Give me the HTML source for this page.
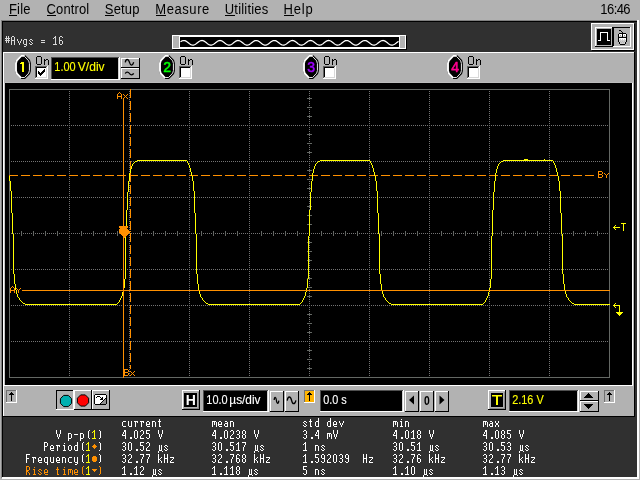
<!DOCTYPE html>
<html><head><meta charset="utf-8"><title>Infiniium</title>
<style>
html,body{margin:0;padding:0;background:#b2b2b2;overflow:hidden}
svg{display:block;will-change:transform}
text{white-space:pre}
</style></head>
<body>
<svg width="640" height="480" viewBox="0 0 640 480" shape-rendering="crispEdges">
<defs><path id="g0" d="M1 0h1v1h-1zM3 0h1v1h-1zM1 1h1v1h-1zM3 1h1v1h-1zM0 2h5v1h-5zM1 3h1v1h-1zM3 3h1v1h-1zM0 4h5v1h-5zM1 5h1v1h-1zM3 5h1v1h-1zM1 6h1v1h-1zM3 6h1v1h-1z"/><path id="g1" d="M1 0h2v1h-2zM0 1h1v1h-1zM3 1h1v1h-1zM0 2h1v1h-1zM3 2h1v1h-1zM0 3h1v1h-1zM3 3h1v1h-1zM0 4h4v1h-4zM0 5h1v1h-1zM3 5h1v1h-1zM0 6h1v1h-1zM3 6h1v1h-1zM0 7h1v1h-1zM3 7h1v1h-1zM0 8h1v1h-1zM3 8h1v1h-1z"/><path id="g2" d="M0 3h1v1h-1zM4 3h1v1h-1zM0 4h1v1h-1zM4 4h1v1h-1zM1 5h1v1h-1zM3 5h1v1h-1zM1 6h1v1h-1zM3 6h1v1h-1zM2 7h1v1h-1zM2 8h1v1h-1z"/><path id="g3" d="M1 3h3v1h-3zM0 4h1v1h-1zM3 4h1v1h-1zM0 5h1v1h-1zM3 5h1v1h-1zM0 6h1v1h-1zM3 6h1v1h-1zM0 7h1v1h-1zM3 7h1v1h-1zM1 8h3v1h-3zM3 9h1v1h-1zM1 10h2v1h-2z"/><path id="g4" d="M1 3h2v1h-2zM0 4h1v1h-1zM3 4h1v1h-1zM1 5h1v1h-1zM2 6h1v1h-1zM0 7h1v1h-1zM3 7h1v1h-1zM1 8h2v1h-2z"/><path id="g5" d="M0 4h4v1h-4zM0 6h4v1h-4z"/><path id="g6" d="M2 0h1v1h-1zM1 1h2v1h-2zM0 2h1v1h-1zM2 2h1v1h-1zM2 3h1v1h-1zM2 4h1v1h-1zM2 5h1v1h-1zM2 6h1v1h-1zM2 7h1v1h-1zM0 8h4v1h-4z"/><path id="g7" d="M1 0h2v1h-2zM0 1h1v1h-1zM3 1h1v1h-1zM0 2h1v1h-1zM0 3h1v1h-1zM0 4h3v1h-3zM0 5h1v1h-1zM3 5h1v1h-1zM0 6h1v1h-1zM3 6h1v1h-1zM0 7h1v1h-1zM3 7h1v1h-1zM1 8h2v1h-2z"/><path id="g8" d="M1 0h4v1h-4zM0 1h1v1h-1zM5 1h1v1h-1zM0 2h1v1h-1zM5 2h1v1h-1zM0 3h1v1h-1zM5 3h1v1h-1zM0 4h1v1h-1zM5 4h1v1h-1zM0 5h1v1h-1zM5 5h1v1h-1zM0 6h1v1h-1zM5 6h1v1h-1zM0 7h1v1h-1zM5 7h1v1h-1zM1 8h4v1h-4z"/><path id="g9" d="M0 3h1v1h-1zM2 3h2v1h-2zM0 4h2v1h-2zM4 4h1v1h-1zM0 5h1v1h-1zM4 5h1v1h-1zM0 6h1v1h-1zM4 6h1v1h-1zM0 7h1v1h-1zM4 7h1v1h-1zM0 8h1v1h-1zM4 8h1v1h-1z"/><path id="g10" d="M1 3h3v1h-3zM0 4h1v1h-1zM0 5h1v1h-1zM0 6h1v1h-1zM0 7h1v1h-1zM1 8h3v1h-3z"/><path id="g11" d="M0 3h1v1h-1zM3 3h1v1h-1zM0 4h1v1h-1zM3 4h1v1h-1zM0 5h1v1h-1zM3 5h1v1h-1zM0 6h1v1h-1zM3 6h1v1h-1zM0 7h1v1h-1zM3 7h1v1h-1zM1 8h3v1h-3z"/><path id="g12" d="M0 3h4v1h-4zM1 4h1v1h-1zM3 4h1v1h-1zM1 5h1v1h-1zM1 6h1v1h-1zM1 7h1v1h-1zM1 8h1v1h-1z"/><path id="g13" d="M1 3h2v1h-2zM0 4h1v1h-1zM3 4h1v1h-1zM0 5h1v1h-1zM3 5h1v1h-1zM0 6h4v1h-4zM0 7h1v1h-1zM1 8h3v1h-3z"/><path id="g14" d="M0 3h3v1h-3zM0 4h1v1h-1zM3 4h1v1h-1zM0 5h1v1h-1zM3 5h1v1h-1zM0 6h1v1h-1zM3 6h1v1h-1zM0 7h1v1h-1zM3 7h1v1h-1zM0 8h1v1h-1zM3 8h1v1h-1z"/><path id="g15" d="M1 1h1v1h-1zM1 2h1v1h-1zM0 3h3v1h-3zM1 4h1v1h-1zM1 5h1v1h-1zM1 6h1v1h-1zM1 7h1v1h-1zM1 8h2v1h-2z"/><path id="g16" d="M0 3h4v1h-4zM0 4h1v1h-1zM2 4h1v1h-1zM4 4h1v1h-1zM0 5h1v1h-1zM2 5h1v1h-1zM4 5h1v1h-1zM0 6h1v1h-1zM2 6h1v1h-1zM4 6h1v1h-1zM0 7h1v1h-1zM4 7h1v1h-1zM0 8h1v1h-1zM4 8h1v1h-1z"/><path id="g17" d="M1 3h2v1h-2zM3 4h1v1h-1zM1 5h3v1h-3zM0 6h1v1h-1zM3 6h1v1h-1zM0 7h1v1h-1zM3 7h1v1h-1zM1 8h3v1h-3z"/><path id="g18" d="M3 0h1v1h-1zM3 1h1v1h-1zM3 2h1v1h-1zM1 3h3v1h-3zM0 4h1v1h-1zM3 4h1v1h-1zM0 5h1v1h-1zM3 5h1v1h-1zM0 6h1v1h-1zM3 6h1v1h-1zM0 7h1v1h-1zM3 7h1v1h-1zM1 8h3v1h-3z"/><path id="g19" d="M2 1h1v1h-1zM1 3h2v1h-2zM2 4h1v1h-1zM2 5h1v1h-1zM2 6h1v1h-1zM2 7h1v1h-1zM1 8h3v1h-3z"/><path id="g20" d="M0 3h1v1h-1zM3 3h1v1h-1zM0 4h1v1h-1zM3 4h1v1h-1zM1 5h2v1h-2zM1 6h2v1h-2zM0 7h1v1h-1zM3 7h1v1h-1zM0 8h1v1h-1zM3 8h1v1h-1z"/><path id="g21" d="M0 0h1v1h-1zM4 0h1v1h-1zM0 1h1v1h-1zM4 1h1v1h-1zM0 2h1v1h-1zM4 2h1v1h-1zM0 3h1v1h-1zM4 3h1v1h-1zM1 4h1v1h-1zM3 4h1v1h-1zM1 5h1v1h-1zM3 5h1v1h-1zM1 6h1v1h-1zM3 6h1v1h-1zM2 7h1v1h-1zM2 8h1v1h-1z"/><path id="g22" d="M0 3h3v1h-3zM0 4h1v1h-1zM3 4h1v1h-1zM0 5h1v1h-1zM3 5h1v1h-1zM0 6h1v1h-1zM3 6h1v1h-1zM0 7h1v1h-1zM3 7h1v1h-1zM0 8h3v1h-3zM0 9h1v1h-1zM0 10h1v1h-1z"/><path id="g23" d="M0 4h4v1h-4z"/><path id="g24" d="M3 0h1v1h-1zM2 1h1v1h-1zM2 2h1v1h-1zM2 3h1v1h-1zM2 4h1v1h-1zM2 5h1v1h-1zM2 6h1v1h-1zM2 7h1v1h-1zM3 8h1v1h-1z"/><path id="g25" d="M1 0h1v1h-1zM2 1h1v1h-1zM2 2h1v1h-1zM2 3h1v1h-1zM2 4h1v1h-1zM2 5h1v1h-1zM2 6h1v1h-1zM2 7h1v1h-1zM1 8h1v1h-1z"/><path id="g26" d="M2 0h2v1h-2zM2 1h2v1h-2zM1 2h1v1h-1zM3 2h1v1h-1zM1 3h1v1h-1zM3 3h1v1h-1zM0 4h1v1h-1zM3 4h1v1h-1zM0 5h4v1h-4zM3 6h1v1h-1zM3 7h1v1h-1zM3 8h1v1h-1z"/><path id="g27" d="M2 7h2v1h-2zM2 8h2v1h-2z"/><path id="g28" d="M1 0h2v1h-2zM0 1h1v1h-1zM3 1h1v1h-1zM0 2h1v1h-1zM3 2h1v1h-1zM0 3h1v1h-1zM3 3h1v1h-1zM0 4h1v1h-1zM3 4h1v1h-1zM0 5h1v1h-1zM3 5h1v1h-1zM0 6h1v1h-1zM3 6h1v1h-1zM0 7h1v1h-1zM3 7h1v1h-1zM1 8h2v1h-2z"/><path id="g29" d="M1 0h2v1h-2zM0 1h1v1h-1zM3 1h1v1h-1zM3 2h1v1h-1zM3 3h1v1h-1zM2 4h1v1h-1zM1 5h1v1h-1zM0 6h1v1h-1zM0 7h1v1h-1zM0 8h4v1h-4z"/><path id="g30" d="M0 0h4v1h-4zM0 1h1v1h-1zM0 2h1v1h-1zM0 3h3v1h-3zM3 4h1v1h-1zM3 5h1v1h-1zM3 6h1v1h-1zM0 7h1v1h-1zM3 7h1v1h-1zM1 8h2v1h-2z"/><path id="g31" d="M1 0h2v1h-2zM0 1h1v1h-1zM3 1h1v1h-1zM3 2h1v1h-1zM3 3h1v1h-1zM1 4h2v1h-2zM3 5h1v1h-1zM3 6h1v1h-1zM0 7h1v1h-1zM3 7h1v1h-1zM1 8h2v1h-2z"/><path id="g32" d="M1 0h2v1h-2zM0 1h1v1h-1zM3 1h1v1h-1zM0 2h1v1h-1zM3 2h1v1h-1zM0 3h1v1h-1zM3 3h1v1h-1zM1 4h2v1h-2zM0 5h1v1h-1zM3 5h1v1h-1zM0 6h1v1h-1zM3 6h1v1h-1zM0 7h1v1h-1zM3 7h1v1h-1zM1 8h2v1h-2z"/><path id="g33" d="M0 0h3v1h-3zM0 1h1v1h-1zM3 1h1v1h-1zM0 2h1v1h-1zM3 2h1v1h-1zM0 3h1v1h-1zM3 3h1v1h-1zM0 4h3v1h-3zM0 5h1v1h-1zM0 6h1v1h-1zM0 7h1v1h-1zM0 8h1v1h-1z"/><path id="g34" d="M1 3h2v1h-2zM0 4h1v1h-1zM3 4h1v1h-1zM0 5h1v1h-1zM3 5h1v1h-1zM0 6h1v1h-1zM3 6h1v1h-1zM0 7h1v1h-1zM3 7h1v1h-1zM1 8h2v1h-2z"/><path id="g35" d="M1 3h1v1h-1zM3 3h1v1h-1zM1 4h1v1h-1zM3 4h1v1h-1zM1 5h1v1h-1zM3 5h1v1h-1zM1 6h1v1h-1zM3 6h1v1h-1zM1 7h1v1h-1zM3 7h1v1h-1zM1 8h3v1h-3zM0 9h1v1h-1zM4 9h1v1h-1zM0 10h1v1h-1z"/><path id="g36" d="M0 0h4v1h-4zM3 1h1v1h-1zM3 2h1v1h-1zM2 3h1v1h-1zM2 4h1v1h-1zM1 5h1v1h-1zM1 6h1v1h-1zM1 7h1v1h-1zM1 8h1v1h-1z"/><path id="g37" d="M0 0h4v1h-4zM0 1h1v1h-1zM0 2h1v1h-1zM0 3h1v1h-1zM0 4h3v1h-3zM0 5h1v1h-1zM0 6h1v1h-1zM0 7h1v1h-1zM0 8h1v1h-1z"/><path id="g38" d="M1 3h3v1h-3zM0 4h1v1h-1zM3 4h1v1h-1zM0 5h1v1h-1zM3 5h1v1h-1zM0 6h1v1h-1zM3 6h1v1h-1zM0 7h1v1h-1zM3 7h1v1h-1zM1 8h3v1h-3zM3 9h1v1h-1zM3 10h1v1h-1z"/><path id="g39" d="M0 3h1v1h-1zM3 3h1v1h-1zM0 4h1v1h-1zM3 4h1v1h-1zM0 5h1v1h-1zM3 5h1v1h-1zM0 6h1v1h-1zM3 6h1v1h-1zM0 7h1v1h-1zM3 7h1v1h-1zM1 8h3v1h-3zM3 9h1v1h-1zM1 10h2v1h-2z"/><path id="g40" d="M0 0h1v1h-1zM0 1h1v1h-1zM0 2h1v1h-1zM0 3h1v1h-1zM3 3h1v1h-1zM0 4h1v1h-1zM2 4h1v1h-1zM0 5h2v1h-2zM0 6h1v1h-1zM2 6h1v1h-1zM0 7h1v1h-1zM3 7h1v1h-1zM0 8h1v1h-1zM3 8h1v1h-1z"/><path id="g41" d="M0 0h1v1h-1zM3 0h1v1h-1zM0 1h1v1h-1zM3 1h1v1h-1zM0 2h1v1h-1zM3 2h1v1h-1zM0 3h1v1h-1zM3 3h1v1h-1zM0 4h4v1h-4zM0 5h1v1h-1zM3 5h1v1h-1zM0 6h1v1h-1zM3 6h1v1h-1zM0 7h1v1h-1zM3 7h1v1h-1zM0 8h1v1h-1zM3 8h1v1h-1z"/><path id="g42" d="M0 3h4v1h-4zM3 4h1v1h-1zM2 5h1v1h-1zM1 6h1v1h-1zM0 7h1v1h-1zM0 8h4v1h-4z"/><path id="g43" d="M1 0h2v1h-2zM0 1h1v1h-1zM3 1h1v1h-1zM0 2h1v1h-1zM3 2h1v1h-1zM0 3h1v1h-1zM3 3h1v1h-1zM1 4h3v1h-3zM3 5h1v1h-1zM3 6h1v1h-1zM0 7h1v1h-1zM3 7h1v1h-1zM1 8h2v1h-2z"/><path id="g44" d="M0 0h3v1h-3zM0 1h1v1h-1zM3 1h1v1h-1zM0 2h1v1h-1zM3 2h1v1h-1zM0 3h1v1h-1zM3 3h1v1h-1zM0 4h3v1h-3zM0 5h2v1h-2zM0 6h1v1h-1zM2 6h1v1h-1zM0 7h1v1h-1zM3 7h1v1h-1zM0 8h1v1h-1zM3 8h1v1h-1z"/></defs>
<rect x="0" y="0" width="640" height="480" fill="#b2b2b2"/>
<rect x="1" y="20" width="637" height="1" fill="#808080"/>
<rect x="1" y="20" width="1" height="458" fill="#808080"/>
<rect x="2" y="21" width="635" height="1" fill="#000"/>
<rect x="2" y="21" width="1" height="456" fill="#000"/>
<rect x="637" y="20" width="2" height="459" fill="#fff"/>
<rect x="2" y="477" width="637" height="2" fill="#fff"/>
<rect x="3" y="22" width="634" height="455" fill="#303030"/>
<text transform="translate(9 14) scale(1 1.07)" font-family="'Liberation Sans', sans-serif" font-size="13" fill="#000" textLength="21.50" lengthAdjust="spacing">File</text>
<rect x="9" y="15" width="8" height="1" fill="#000"/>
<text transform="translate(46.6 14) scale(1 1.07)" font-family="'Liberation Sans', sans-serif" font-size="13" fill="#000" textLength="42.60" lengthAdjust="spacing">Control</text>
<rect x="47" y="15" width="9" height="1" fill="#000"/>
<text transform="translate(104.8 14) scale(1 1.07)" font-family="'Liberation Sans', sans-serif" font-size="13" fill="#000" textLength="34.60" lengthAdjust="spacing">Setup</text>
<rect x="105" y="15" width="9" height="1" fill="#000"/>
<text transform="translate(155.3 14) scale(1 1.07)" font-family="'Liberation Sans', sans-serif" font-size="13" fill="#000" textLength="54.00" lengthAdjust="spacing">Measure</text>
<rect x="156" y="15" width="10" height="1" fill="#000"/>
<text transform="translate(224.8 14) scale(1 1.07)" font-family="'Liberation Sans', sans-serif" font-size="13" fill="#000" textLength="43.40" lengthAdjust="spacing">Utilities</text>
<rect x="225" y="15" width="10" height="1" fill="#000"/>
<text transform="translate(283.5 14) scale(1 1.07)" font-family="'Liberation Sans', sans-serif" font-size="13" fill="#000" textLength="29.20" lengthAdjust="spacing">Help</text>
<rect x="284" y="15" width="10" height="1" fill="#000"/>
<text transform="translate(600.3 14) scale(1 1.07)" font-family="'Liberation Sans', sans-serif" font-size="13" fill="#000" textLength="30.30" lengthAdjust="spacing">16:46</text>
<g fill="#d8d8d8"><use href="#g0" x="5" y="36"/><use href="#g1" x="11" y="36"/><use href="#g2" x="17" y="36"/><use href="#g3" x="23" y="36"/><use href="#g4" x="29" y="36"/><use href="#g5" x="41" y="36"/><use href="#g6" x="53" y="36"/><use href="#g7" x="59" y="36"/></g>
<rect x="173" y="36" width="234" height="14" fill="#000"/>
<rect x="172" y="35" width="234" height="14" fill="#fff"/>
<rect x="173" y="36" width="232" height="12" fill="#b2b2b2"/>
<rect x="179" y="36" width="221" height="12" fill="#fff"/>
<rect x="180" y="37" width="219" height="10" fill="#000"/>
<polyline points="180.5,41.85 181.0,41.50 181.5,41.19 182.0,40.93 182.5,40.73 183.0,40.59 183.5,40.51 184.0,40.51 184.5,40.57 185.0,40.70 185.5,40.89 186.0,41.14 186.5,41.44 187.0,41.78 187.5,42.15 188.0,42.54 188.5,42.94 189.0,43.33 189.5,43.71 190.0,44.06 190.5,44.38 191.0,44.64 191.5,44.85 192.0,45.00 192.5,45.08 193.0,45.10 193.5,45.04 194.0,44.92 194.5,44.73 195.0,44.49 195.5,44.19 196.0,43.86 196.5,43.49 197.0,43.10 197.5,42.70 198.0,42.30 198.5,41.92 199.0,41.57 199.5,41.25 200.0,40.98 200.5,40.77 201.0,40.61 201.5,40.52 202.0,40.50 202.5,40.55 203.0,40.67 203.5,40.85 204.0,41.08 204.5,41.37 205.0,41.71 205.5,42.07 206.0,42.46 206.5,42.86 207.0,43.26 207.5,43.64 208.0,44.00 208.5,44.32 209.0,44.59 209.5,44.81 210.0,44.98 210.5,45.07 211.0,45.10 211.5,45.06 212.0,44.95 212.5,44.78 213.0,44.54 213.5,44.26 214.0,43.93 214.5,43.56 215.0,43.18 215.5,42.78 216.0,42.38 216.5,42.00 217.0,41.64 217.5,41.31 218.0,41.03 218.5,40.80 219.0,40.64 219.5,40.53 220.0,40.50 220.5,40.53 221.0,40.64 221.5,40.80 222.0,41.03 222.5,41.31 223.0,41.64 223.5,42.00 224.0,42.38 224.5,42.78 225.0,43.18 225.5,43.56 226.0,43.93 226.5,44.26 227.0,44.54 227.5,44.78 228.0,44.95 228.5,45.06 229.0,45.10 229.5,45.07 230.0,44.98 230.5,44.81 231.0,44.59 231.5,44.32 232.0,44.00 232.5,43.64 233.0,43.26 233.5,42.86 234.0,42.46 234.5,42.07 235.0,41.71 235.5,41.37 236.0,41.08 236.5,40.85 237.0,40.67 237.5,40.55 238.0,40.50 238.5,40.52 239.0,40.61 239.5,40.77 240.0,40.98 240.5,41.25 241.0,41.57 241.5,41.92 242.0,42.30 242.5,42.70 243.0,43.10 243.5,43.49 244.0,43.86 244.5,44.19 245.0,44.49 245.5,44.73 246.0,44.92 246.5,45.04 247.0,45.10 247.5,45.08 248.0,45.00 248.5,44.85 249.0,44.64 249.5,44.38 250.0,44.06 250.5,43.71 251.0,43.33 251.5,42.94 252.0,42.54 252.5,42.15 253.0,41.78 253.5,41.44 254.0,41.14 254.5,40.89 255.0,40.70 255.5,40.57 256.0,40.51 256.5,40.51 257.0,40.59 257.5,40.73 258.0,40.93 258.5,41.19 259.0,41.50 259.5,41.85 260.0,42.23 260.5,42.62 261.0,43.02 261.5,43.41 262.0,43.79 262.5,44.13 263.0,44.43 263.5,44.69 264.0,44.89 264.5,45.02 265.0,45.09 265.5,45.09 266.0,45.02 266.5,44.89 267.0,44.69 267.5,44.43 268.0,44.13 268.5,43.79 269.0,43.41 269.5,43.02 270.0,42.62 270.5,42.23 271.0,41.85 271.5,41.50 272.0,41.19 272.5,40.93 273.0,40.73 273.5,40.59 274.0,40.51 274.5,40.51 275.0,40.57 275.5,40.70 276.0,40.89 276.5,41.14 277.0,41.44 277.5,41.78 278.0,42.15 278.5,42.54 279.0,42.94 279.5,43.33 280.0,43.71 280.5,44.06 281.0,44.38 281.5,44.64 282.0,44.85 282.5,45.00 283.0,45.08 283.5,45.10 284.0,45.04 284.5,44.92 285.0,44.73 285.5,44.49 286.0,44.19 286.5,43.86 287.0,43.49 287.5,43.10 288.0,42.70 288.5,42.30 289.0,41.92 289.5,41.57 290.0,41.25 290.5,40.98 291.0,40.77 291.5,40.61 292.0,40.52 292.5,40.50 293.0,40.55 293.5,40.67 294.0,40.85 294.5,41.08 295.0,41.37 295.5,41.71 296.0,42.07 296.5,42.46 297.0,42.86 297.5,43.26 298.0,43.64 298.5,44.00 299.0,44.32 299.5,44.59 300.0,44.81 300.5,44.98 301.0,45.07 301.5,45.10 302.0,45.06 302.5,44.95 303.0,44.78 303.5,44.54 304.0,44.26 304.5,43.93 305.0,43.56 305.5,43.18 306.0,42.78 306.5,42.38 307.0,42.00 307.5,41.64 308.0,41.31 308.5,41.03 309.0,40.80 309.5,40.64 310.0,40.53 310.5,40.50 311.0,40.53 311.5,40.64 312.0,40.80 312.5,41.03 313.0,41.31 313.5,41.64 314.0,42.00 314.5,42.38 315.0,42.78 315.5,43.18 316.0,43.56 316.5,43.93 317.0,44.26 317.5,44.54 318.0,44.78 318.5,44.95 319.0,45.06 319.5,45.10 320.0,45.07 320.5,44.98 321.0,44.81 321.5,44.59 322.0,44.32 322.5,44.00 323.0,43.64 323.5,43.26 324.0,42.86 324.5,42.46 325.0,42.07 325.5,41.71 326.0,41.37 326.5,41.08 327.0,40.85 327.5,40.67 328.0,40.55 328.5,40.50 329.0,40.52 329.5,40.61 330.0,40.77 330.5,40.98 331.0,41.25 331.5,41.57 332.0,41.92 332.5,42.30 333.0,42.70 333.5,43.10 334.0,43.49 334.5,43.86 335.0,44.19 335.5,44.49 336.0,44.73 336.5,44.92 337.0,45.04 337.5,45.10 338.0,45.08 338.5,45.00 339.0,44.85 339.5,44.64 340.0,44.38 340.5,44.06 341.0,43.71 341.5,43.33 342.0,42.94 342.5,42.54 343.0,42.15 343.5,41.78 344.0,41.44 344.5,41.14 345.0,40.89 345.5,40.70 346.0,40.57 346.5,40.51 347.0,40.51 347.5,40.59 348.0,40.73 348.5,40.93 349.0,41.19 349.5,41.50 350.0,41.85 350.5,42.23 351.0,42.62 351.5,43.02 352.0,43.41 352.5,43.79 353.0,44.13 353.5,44.43 354.0,44.69 354.5,44.89 355.0,45.02 355.5,45.09 356.0,45.09 356.5,45.02 357.0,44.89 357.5,44.69 358.0,44.43 358.5,44.13 359.0,43.79 359.5,43.41 360.0,43.02 360.5,42.62 361.0,42.23 361.5,41.85 362.0,41.50 362.5,41.19 363.0,40.93 363.5,40.73 364.0,40.59 364.5,40.51 365.0,40.51 365.5,40.57 366.0,40.70 366.5,40.89 367.0,41.14 367.5,41.44 368.0,41.78 368.5,42.15 369.0,42.54 369.5,42.94 370.0,43.33 370.5,43.71 371.0,44.06 371.5,44.38 372.0,44.64 372.5,44.85 373.0,45.00 373.5,45.08 374.0,45.10 374.5,45.04 375.0,44.92 375.5,44.73 376.0,44.49 376.5,44.19 377.0,43.86 377.5,43.49 378.0,43.10 378.5,42.70 379.0,42.30 379.5,41.92 380.0,41.57 380.5,41.25 381.0,40.98 381.5,40.77 382.0,40.61 382.5,40.52 383.0,40.50 383.5,40.55 384.0,40.67 384.5,40.85 385.0,41.08 385.5,41.37 386.0,41.71 386.5,42.07 387.0,42.46 387.5,42.86 388.0,43.26 388.5,43.64 389.0,44.00 389.5,44.32 390.0,44.59 390.5,44.81 391.0,44.98 391.5,45.07 392.0,45.10 392.5,45.06 393.0,44.95 393.5,44.78 394.0,44.54 394.5,44.26 395.0,43.93 395.5,43.56 396.0,43.18 396.5,42.78 397.0,42.38 397.5,42.00 398.0,41.64 398.5,41.31" fill="none" stroke="#fff" stroke-width="1.25" shape-rendering="auto"/>
<rect x="592" y="24" width="43" height="27" fill="#000"/>
<rect x="591" y="23" width="43" height="27" fill="#fff"/>
<rect x="592" y="24" width="41" height="25" fill="#b2b2b2"/>
<rect x="595" y="27" width="18" height="20" fill="#000"/>
<rect x="595" y="27" width="17" height="19" fill="#fff"/>
<rect x="596" y="28" width="16" height="18" fill="#b2b2b2"/>
<rect x="597" y="29" width="14" height="16" fill="#000"/>
<path d="M598 40.5H600.5V32.5H607.5V40.5H610" fill="none" stroke="#fff" stroke-width="1" />
<rect x="613" y="27" width="18" height="20" fill="#fff"/>
<rect x="613" y="27" width="17" height="19" fill="#000"/>
<rect x="614" y="28" width="16" height="18" fill="#b2b2b2"/>
<rect x="619" y="30" width="2" height="1" fill="#000"/>
<rect x="621" y="31" width="1" height="1" fill="#000"/>
<rect x="622" y="32" width="1" height="1" fill="#000"/>
<rect x="619" y="33" width="7" height="1" fill="#000"/>
<rect x="618" y="34" width="1" height="1" fill="#000"/>
<rect x="619" y="34" width="3" height="1" fill="#fff"/>
<rect x="622" y="34" width="1" height="1" fill="#000"/>
<rect x="623" y="34" width="3" height="1" fill="#fff"/>
<rect x="626" y="34" width="1" height="1" fill="#000"/>
<rect x="618" y="35" width="1" height="1" fill="#000"/>
<rect x="619" y="35" width="1" height="1" fill="#fff"/>
<rect x="620" y="35" width="1" height="1" fill="#909090"/>
<rect x="621" y="35" width="1" height="1" fill="#fff"/>
<rect x="622" y="35" width="1" height="1" fill="#000"/>
<rect x="623" y="35" width="1" height="1" fill="#fff"/>
<rect x="624" y="35" width="1" height="1" fill="#909090"/>
<rect x="625" y="35" width="1" height="1" fill="#fff"/>
<rect x="626" y="35" width="1" height="1" fill="#000"/>
<rect x="618" y="36" width="1" height="1" fill="#000"/>
<rect x="619" y="36" width="3" height="1" fill="#d0d0d0"/>
<rect x="622" y="36" width="1" height="1" fill="#000"/>
<rect x="623" y="36" width="3" height="1" fill="#d0d0d0"/>
<rect x="626" y="36" width="1" height="1" fill="#000"/>
<rect x="618" y="37" width="9" height="1" fill="#000"/>
<rect x="618" y="38" width="1" height="1" fill="#000"/>
<rect x="619" y="38" width="7" height="1" fill="#fff"/>
<rect x="626" y="38" width="1" height="1" fill="#000"/>
<rect x="618" y="39" width="1" height="1" fill="#000"/>
<rect x="619" y="39" width="1" height="1" fill="#fff"/>
<rect x="620" y="39" width="1" height="1" fill="#d0d0d0"/>
<rect x="621" y="39" width="1" height="1" fill="#fff"/>
<rect x="622" y="39" width="1" height="1" fill="#d0d0d0"/>
<rect x="623" y="39" width="1" height="1" fill="#fff"/>
<rect x="624" y="39" width="1" height="1" fill="#d0d0d0"/>
<rect x="625" y="39" width="1" height="1" fill="#fff"/>
<rect x="626" y="39" width="1" height="1" fill="#000"/>
<rect x="618" y="40" width="1" height="1" fill="#000"/>
<rect x="619" y="40" width="7" height="1" fill="#d0d0d0"/>
<rect x="626" y="40" width="1" height="1" fill="#000"/>
<rect x="618" y="41" width="1" height="1" fill="#000"/>
<rect x="619" y="41" width="1" height="1" fill="#d0d0d0"/>
<rect x="620" y="41" width="1" height="1" fill="#b8b8b8"/>
<rect x="621" y="41" width="1" height="1" fill="#d0d0d0"/>
<rect x="622" y="41" width="1" height="1" fill="#b8b8b8"/>
<rect x="623" y="41" width="1" height="1" fill="#d0d0d0"/>
<rect x="624" y="41" width="1" height="1" fill="#b8b8b8"/>
<rect x="625" y="41" width="1" height="1" fill="#d0d0d0"/>
<rect x="626" y="41" width="1" height="1" fill="#000"/>
<rect x="619" y="42" width="1" height="1" fill="#000"/>
<rect x="620" y="42" width="1" height="1" fill="#d0d0d0"/>
<rect x="621" y="42" width="1" height="1" fill="#b8b8b8"/>
<rect x="622" y="42" width="1" height="1" fill="#d0d0d0"/>
<rect x="623" y="42" width="1" height="1" fill="#b8b8b8"/>
<rect x="624" y="42" width="1" height="1" fill="#d0d0d0"/>
<rect x="625" y="42" width="1" height="1" fill="#000"/>
<rect x="619" y="43" width="1" height="1" fill="#000"/>
<rect x="620" y="43" width="5" height="1" fill="#d0d0d0"/>
<rect x="625" y="43" width="1" height="1" fill="#000"/>
<rect x="620" y="44" width="5" height="1" fill="#000"/>
<rect x="3" y="52" width="631" height="364" fill="#b2b2b2"/>
<rect x="3" y="52" width="631" height="1" fill="#fff"/>
<rect x="3" y="52" width="1" height="364" fill="#fff"/>
<rect x="634" y="52" width="1" height="365" fill="#000"/>
<rect x="3" y="416" width="632" height="1" fill="#000"/>
<path d="M21.00 55.00 L25.00 55.00 L30.00 60.00 L30.90 63.00 L30.90 71.00 L30.00 74.00 L25.00 79.00 L21.00 79.00 L16.00 74.00 L15.10 71.00 L15.10 63.00 L16.00 60.00 Z" fill="#000" shape-rendering="auto"/>
<path d="M24.62 56.50 L28.69 60.88 L29.42 63.50 L29.42 70.50 L28.69 73.12 L24.62 77.50 L21.38 77.50" fill="none" stroke="#e8e8e8" stroke-width="1" shape-rendering="auto"/>
<path d="M21.23 78.10 L16.79 73.47 L15.99 70.70 L15.99 63.30 L16.79 60.52 L21.23 55.90 L24.77 55.90" fill="none" stroke="#fff" stroke-width="1.9" shape-rendering="auto" stroke-linejoin="round"/>
<rect x="22" y="62" width="2" height="10" fill="#ffff00"/>
<rect x="20" y="63" width="2" height="1" fill="#ffff00"/>
<rect x="21" y="62" width="1" height="1" fill="#ffff00"/>
<g fill="#000"><use href="#g8" x="36" y="56"/><use href="#g9" x="44" y="56"/></g>
<rect x="35" y="66" width="13" height="13" fill="#fff"/>
<rect x="35" y="66" width="12" height="1" fill="#606060"/>
<rect x="35" y="66" width="1" height="12" fill="#606060"/>
<rect x="36" y="67" width="10" height="1" fill="#000"/>
<rect x="36" y="67" width="1" height="10" fill="#000"/>
<rect x="36" y="77" width="11" height="1" fill="#d8d8d8"/>
<rect x="46" y="67" width="1" height="11" fill="#d8d8d8"/>
<rect x="38" y="71" width="1" height="3" fill="#000"/>
<rect x="39" y="72" width="1" height="3" fill="#000"/>
<rect x="40" y="73" width="1" height="3" fill="#000"/>
<rect x="41" y="72" width="1" height="3" fill="#000"/>
<rect x="42" y="71" width="1" height="3" fill="#000"/>
<rect x="43" y="70" width="1" height="3" fill="#000"/>
<rect x="44" y="69" width="1" height="3" fill="#000"/>
<path d="M165.00 55.00 L169.00 55.00 L174.00 60.00 L174.90 63.00 L174.90 71.00 L174.00 74.00 L169.00 79.00 L165.00 79.00 L160.00 74.00 L159.10 71.00 L159.10 63.00 L160.00 60.00 Z" fill="#000" shape-rendering="auto"/>
<path d="M168.62 56.50 L172.69 60.88 L173.42 63.50 L173.42 70.50 L172.69 73.12 L168.62 77.50 L165.38 77.50" fill="none" stroke="#e8e8e8" stroke-width="1" shape-rendering="auto"/>
<path d="M165.22 78.10 L160.79 73.47 L159.99 70.70 L159.99 63.30 L160.79 60.52 L165.22 55.90 L168.78 55.90" fill="none" stroke="#fff" stroke-width="1.9" shape-rendering="auto" stroke-linejoin="round"/>
<text x="167.2" y="72" font-family="'Liberation Sans', sans-serif" font-size="14" fill="#00ff00" text-anchor="middle" stroke="#00ff00" stroke-width="0.55">2</text>
<g fill="#000"><use href="#g8" x="180" y="56"/><use href="#g9" x="188" y="56"/></g>
<rect x="179" y="66" width="13" height="13" fill="#fff"/>
<rect x="179" y="66" width="12" height="1" fill="#606060"/>
<rect x="179" y="66" width="1" height="12" fill="#606060"/>
<rect x="180" y="67" width="10" height="1" fill="#000"/>
<rect x="180" y="67" width="1" height="10" fill="#000"/>
<rect x="180" y="77" width="11" height="1" fill="#d8d8d8"/>
<rect x="190" y="67" width="1" height="11" fill="#d8d8d8"/>
<path d="M309.00 55.00 L313.00 55.00 L318.00 60.00 L318.90 63.00 L318.90 71.00 L318.00 74.00 L313.00 79.00 L309.00 79.00 L304.00 74.00 L303.10 71.00 L303.10 63.00 L304.00 60.00 Z" fill="#000" shape-rendering="auto"/>
<path d="M312.62 56.50 L316.69 60.88 L317.42 63.50 L317.42 70.50 L316.69 73.12 L312.62 77.50 L309.38 77.50" fill="none" stroke="#e8e8e8" stroke-width="1" shape-rendering="auto"/>
<path d="M309.23 78.10 L304.79 73.47 L303.99 70.70 L303.99 63.30 L304.79 60.52 L309.23 55.90 L312.77 55.90" fill="none" stroke="#fff" stroke-width="1.9" shape-rendering="auto" stroke-linejoin="round"/>
<text x="311.2" y="72" font-family="'Liberation Sans', sans-serif" font-size="14" fill="#a000ff" text-anchor="middle" stroke="#a000ff" stroke-width="0.55">3</text>
<g fill="#000"><use href="#g8" x="324" y="56"/><use href="#g9" x="332" y="56"/></g>
<rect x="323" y="66" width="13" height="13" fill="#fff"/>
<rect x="323" y="66" width="12" height="1" fill="#606060"/>
<rect x="323" y="66" width="1" height="12" fill="#606060"/>
<rect x="324" y="67" width="10" height="1" fill="#000"/>
<rect x="324" y="67" width="1" height="10" fill="#000"/>
<rect x="324" y="77" width="11" height="1" fill="#d8d8d8"/>
<rect x="334" y="67" width="1" height="11" fill="#d8d8d8"/>
<path d="M453.00 55.00 L457.00 55.00 L462.00 60.00 L462.90 63.00 L462.90 71.00 L462.00 74.00 L457.00 79.00 L453.00 79.00 L448.00 74.00 L447.10 71.00 L447.10 63.00 L448.00 60.00 Z" fill="#000" shape-rendering="auto"/>
<path d="M456.62 56.50 L460.69 60.88 L461.42 63.50 L461.42 70.50 L460.69 73.12 L456.62 77.50 L453.38 77.50" fill="none" stroke="#e8e8e8" stroke-width="1" shape-rendering="auto"/>
<path d="M453.23 78.10 L448.79 73.47 L447.99 70.70 L447.99 63.30 L448.79 60.52 L453.23 55.90 L456.77 55.90" fill="none" stroke="#fff" stroke-width="1.9" shape-rendering="auto" stroke-linejoin="round"/>
<text x="455.2" y="72" font-family="'Liberation Sans', sans-serif" font-size="14" fill="#ff0090" text-anchor="middle" stroke="#ff0090" stroke-width="0.55">4</text>
<g fill="#000"><use href="#g8" x="468" y="56"/><use href="#g9" x="476" y="56"/></g>
<rect x="467" y="66" width="13" height="13" fill="#fff"/>
<rect x="467" y="66" width="12" height="1" fill="#606060"/>
<rect x="467" y="66" width="1" height="12" fill="#606060"/>
<rect x="468" y="67" width="10" height="1" fill="#000"/>
<rect x="468" y="67" width="1" height="10" fill="#000"/>
<rect x="468" y="77" width="11" height="1" fill="#d8d8d8"/>
<rect x="478" y="67" width="1" height="11" fill="#d8d8d8"/>
<rect x="51" y="57" width="69" height="23" fill="#fff"/>
<rect x="51" y="57" width="68" height="22" fill="#505050"/>
<rect x="52" y="58" width="67" height="21" fill="#000"/>
<rect x="118" y="58" width="1" height="21" fill="#d0d0d0"/>
<text transform="translate(54.3 71) scale(1 1.04)" font-family="'Liberation Sans', sans-serif" font-size="12" fill="#ffff00" textLength="21.30" lengthAdjust="spacingAndGlyphs" stroke="#ffff00" stroke-width="0.12">1.00</text>
<text transform="translate(77.8 71) scale(1 1.04)" font-family="'Liberation Sans', sans-serif" font-size="12" fill="#ffff00" textLength="26.80" lengthAdjust="spacingAndGlyphs" stroke="#ffff00" stroke-width="0.12">V/div</text>
<rect x="121" y="58" width="19" height="10" fill="#b2b2b2"/>
<rect x="121" y="58" width="19" height="1" fill="#fff"/>
<rect x="121" y="58" width="1" height="10" fill="#fff"/>
<rect x="121" y="67" width="19" height="1" fill="#000"/>
<rect x="139" y="58" width="1" height="10" fill="#000"/>
<rect x="121" y="68" width="19" height="11" fill="#b2b2b2"/>
<rect x="121" y="68" width="19" height="1" fill="#fff"/>
<rect x="121" y="68" width="1" height="11" fill="#fff"/>
<rect x="121" y="78" width="19" height="1" fill="#000"/>
<rect x="139" y="68" width="1" height="11" fill="#000"/>
<path d="M125.3 62.3 C126 58.6 128.3 58.6 129.5 62.3 C130.5 66 132.6 66 133.7 62.3" fill="none" stroke="#000" stroke-width="1.3" shape-rendering="auto"/>
<path d="M125.3 73.6 C126 71.7 128.3 71.7 129.5 73.5 C130.5 75.3 132.6 75.3 133.7 73.4" fill="none" stroke="#000" stroke-width="1.3" shape-rendering="auto"/>
<rect x="5" y="83" width="627" height="302" fill="#000"/>
<rect x="4" y="83" width="1" height="303" fill="#c4c4c4"/>
<rect x="5" y="82" width="628" height="1" fill="#bcbcbc"/>
<rect x="632" y="83" width="1" height="303" fill="#fff"/>
<rect x="4" y="385" width="629" height="1" fill="#fff"/>
<rect x="9.5" y="89.5" width="600" height="288" fill="none" stroke="#646864" stroke-width="1"/>
<line x1="69.5" y1="91" x2="69.5" y2="377" stroke="#747474" stroke-dasharray="1 1"/>
<line x1="129.5" y1="91" x2="129.5" y2="377" stroke="#747474" stroke-dasharray="1 1"/>
<line x1="189.5" y1="91" x2="189.5" y2="377" stroke="#747474" stroke-dasharray="1 1"/>
<line x1="249.5" y1="91" x2="249.5" y2="377" stroke="#747474" stroke-dasharray="1 1"/>
<line x1="309.5" y1="91" x2="309.5" y2="377" stroke="#747474" stroke-dasharray="1 1"/>
<line x1="369.5" y1="91" x2="369.5" y2="377" stroke="#747474" stroke-dasharray="1 1"/>
<line x1="429.5" y1="91" x2="429.5" y2="377" stroke="#747474" stroke-dasharray="1 1"/>
<line x1="489.5" y1="91" x2="489.5" y2="377" stroke="#747474" stroke-dasharray="1 1"/>
<line x1="549.5" y1="91" x2="549.5" y2="377" stroke="#747474" stroke-dasharray="1 1"/>
<line x1="11" y1="125.5" x2="609" y2="125.5" stroke="#747474" stroke-dasharray="1 1"/>
<line x1="11" y1="161.5" x2="609" y2="161.5" stroke="#747474" stroke-dasharray="1 1"/>
<line x1="11" y1="197.5" x2="609" y2="197.5" stroke="#747474" stroke-dasharray="1 1"/>
<line x1="11" y1="233.5" x2="609" y2="233.5" stroke="#747474" stroke-dasharray="1 1"/>
<line x1="11" y1="269.5" x2="609" y2="269.5" stroke="#747474" stroke-dasharray="1 1"/>
<line x1="11" y1="305.5" x2="609" y2="305.5" stroke="#747474" stroke-dasharray="1 1"/>
<line x1="11" y1="341.5" x2="609" y2="341.5" stroke="#747474" stroke-dasharray="1 1"/>
<rect x="21" y="231" width="1" height="5" fill="#646864"/>
<rect x="33" y="231" width="1" height="5" fill="#646864"/>
<rect x="45" y="231" width="1" height="5" fill="#646864"/>
<rect x="57" y="231" width="1" height="5" fill="#646864"/>
<rect x="81" y="231" width="1" height="5" fill="#646864"/>
<rect x="93" y="231" width="1" height="5" fill="#646864"/>
<rect x="105" y="231" width="1" height="5" fill="#646864"/>
<rect x="117" y="231" width="1" height="5" fill="#646864"/>
<rect x="141" y="231" width="1" height="5" fill="#646864"/>
<rect x="153" y="231" width="1" height="5" fill="#646864"/>
<rect x="165" y="231" width="1" height="5" fill="#646864"/>
<rect x="177" y="231" width="1" height="5" fill="#646864"/>
<rect x="201" y="231" width="1" height="5" fill="#646864"/>
<rect x="213" y="231" width="1" height="5" fill="#646864"/>
<rect x="225" y="231" width="1" height="5" fill="#646864"/>
<rect x="237" y="231" width="1" height="5" fill="#646864"/>
<rect x="261" y="231" width="1" height="5" fill="#646864"/>
<rect x="273" y="231" width="1" height="5" fill="#646864"/>
<rect x="285" y="231" width="1" height="5" fill="#646864"/>
<rect x="297" y="231" width="1" height="5" fill="#646864"/>
<rect x="321" y="231" width="1" height="5" fill="#646864"/>
<rect x="333" y="231" width="1" height="5" fill="#646864"/>
<rect x="345" y="231" width="1" height="5" fill="#646864"/>
<rect x="357" y="231" width="1" height="5" fill="#646864"/>
<rect x="381" y="231" width="1" height="5" fill="#646864"/>
<rect x="393" y="231" width="1" height="5" fill="#646864"/>
<rect x="405" y="231" width="1" height="5" fill="#646864"/>
<rect x="417" y="231" width="1" height="5" fill="#646864"/>
<rect x="441" y="231" width="1" height="5" fill="#646864"/>
<rect x="453" y="231" width="1" height="5" fill="#646864"/>
<rect x="465" y="231" width="1" height="5" fill="#646864"/>
<rect x="477" y="231" width="1" height="5" fill="#646864"/>
<rect x="501" y="231" width="1" height="5" fill="#646864"/>
<rect x="513" y="231" width="1" height="5" fill="#646864"/>
<rect x="525" y="231" width="1" height="5" fill="#646864"/>
<rect x="537" y="231" width="1" height="5" fill="#646864"/>
<rect x="561" y="231" width="1" height="5" fill="#646864"/>
<rect x="573" y="231" width="1" height="5" fill="#646864"/>
<rect x="585" y="231" width="1" height="5" fill="#646864"/>
<rect x="597" y="231" width="1" height="5" fill="#646864"/>
<rect x="307" y="98" width="5" height="1" fill="#646864"/>
<rect x="307" y="107" width="5" height="1" fill="#646864"/>
<rect x="307" y="116" width="5" height="1" fill="#646864"/>
<rect x="307" y="134" width="5" height="1" fill="#646864"/>
<rect x="307" y="143" width="5" height="1" fill="#646864"/>
<rect x="307" y="152" width="5" height="1" fill="#646864"/>
<rect x="307" y="170" width="5" height="1" fill="#646864"/>
<rect x="307" y="179" width="5" height="1" fill="#646864"/>
<rect x="307" y="188" width="5" height="1" fill="#646864"/>
<rect x="307" y="206" width="5" height="1" fill="#646864"/>
<rect x="307" y="215" width="5" height="1" fill="#646864"/>
<rect x="307" y="224" width="5" height="1" fill="#646864"/>
<rect x="307" y="242" width="5" height="1" fill="#646864"/>
<rect x="307" y="251" width="5" height="1" fill="#646864"/>
<rect x="307" y="260" width="5" height="1" fill="#646864"/>
<rect x="307" y="278" width="5" height="1" fill="#646864"/>
<rect x="307" y="287" width="5" height="1" fill="#646864"/>
<rect x="307" y="296" width="5" height="1" fill="#646864"/>
<rect x="307" y="314" width="5" height="1" fill="#646864"/>
<rect x="307" y="323" width="5" height="1" fill="#646864"/>
<rect x="307" y="332" width="5" height="1" fill="#646864"/>
<rect x="307" y="350" width="5" height="1" fill="#646864"/>
<rect x="307" y="359" width="5" height="1" fill="#646864"/>
<rect x="307" y="368" width="5" height="1" fill="#646864"/>
<line x1="9" y1="175.5" x2="595" y2="175.5" stroke="#ff9000" stroke-dasharray="9 3"/>
<line x1="130.5" y1="89" x2="130.5" y2="368.5" stroke="#ff9000" stroke-dasharray="9 3"/>
<rect x="9" y="176" width="1" height="5" fill="#ffff00"/>
<rect x="10" y="181" width="1" height="10" fill="#ffff00"/>
<rect x="11" y="191" width="1" height="22" fill="#ffff00"/>
<rect x="12" y="213" width="1" height="21" fill="#ffff00"/>
<rect x="13" y="234" width="1" height="40" fill="#ffff00"/>
<rect x="14" y="274" width="1" height="10" fill="#ffff00"/>
<rect x="15" y="284" width="1" height="6" fill="#ffff00"/>
<rect x="16" y="290" width="1" height="4" fill="#ffff00"/>
<rect x="17" y="294" width="1" height="3" fill="#ffff00"/>
<rect x="18" y="297" width="1" height="1" fill="#ffff00"/>
<rect x="19" y="298" width="1" height="2" fill="#ffff00"/>
<rect x="20" y="300" width="1" height="1" fill="#ffff00"/>
<rect x="21" y="301" width="1" height="1" fill="#ffff00"/>
<rect x="22" y="302" width="1" height="1" fill="#ffff00"/>
<rect x="23" y="303" width="2" height="1" fill="#ffff00"/>
<rect x="25" y="304" width="92" height="1" fill="#ffff00"/>
<rect x="117" y="303" width="1" height="1" fill="#ffff00"/>
<rect x="118" y="302" width="1" height="1" fill="#ffff00"/>
<rect x="119" y="300" width="1" height="2" fill="#ffff00"/>
<rect x="120" y="298" width="1" height="2" fill="#ffff00"/>
<rect x="121" y="296" width="1" height="2" fill="#ffff00"/>
<rect x="122" y="292" width="1" height="4" fill="#ffff00"/>
<rect x="123" y="288" width="1" height="4" fill="#ffff00"/>
<rect x="124" y="279" width="1" height="9" fill="#ffff00"/>
<rect x="125" y="236" width="1" height="43" fill="#ffff00"/>
<rect x="126" y="210" width="1" height="26" fill="#ffff00"/>
<rect x="127" y="192" width="1" height="18" fill="#ffff00"/>
<rect x="128" y="181" width="1" height="11" fill="#ffff00"/>
<rect x="129" y="173" width="1" height="8" fill="#ffff00"/>
<rect x="130" y="169" width="1" height="4" fill="#ffff00"/>
<rect x="131" y="166" width="1" height="3" fill="#ffff00"/>
<rect x="132" y="164" width="1" height="2" fill="#ffff00"/>
<rect x="133" y="163" width="1" height="1" fill="#ffff00"/>
<rect x="134" y="162" width="1" height="1" fill="#ffff00"/>
<rect x="135" y="161" width="2" height="1" fill="#ffff00"/>
<rect x="137" y="160" width="50" height="1" fill="#ffff00"/>
<rect x="187" y="161" width="1" height="2" fill="#ffff00"/>
<rect x="188" y="163" width="1" height="2" fill="#ffff00"/>
<rect x="189" y="165" width="1" height="3" fill="#ffff00"/>
<rect x="190" y="168" width="1" height="4" fill="#ffff00"/>
<rect x="191" y="172" width="1" height="4" fill="#ffff00"/>
<rect x="192" y="176" width="1" height="5" fill="#ffff00"/>
<rect x="193" y="181" width="1" height="10" fill="#ffff00"/>
<rect x="194" y="191" width="1" height="22" fill="#ffff00"/>
<rect x="195" y="213" width="1" height="21" fill="#ffff00"/>
<rect x="196" y="234" width="1" height="40" fill="#ffff00"/>
<rect x="197" y="274" width="1" height="10" fill="#ffff00"/>
<rect x="198" y="284" width="1" height="6" fill="#ffff00"/>
<rect x="199" y="290" width="1" height="4" fill="#ffff00"/>
<rect x="200" y="294" width="1" height="3" fill="#ffff00"/>
<rect x="201" y="297" width="1" height="1" fill="#ffff00"/>
<rect x="202" y="298" width="1" height="2" fill="#ffff00"/>
<rect x="203" y="300" width="1" height="1" fill="#ffff00"/>
<rect x="204" y="301" width="1" height="1" fill="#ffff00"/>
<rect x="205" y="302" width="1" height="1" fill="#ffff00"/>
<rect x="206" y="303" width="2" height="1" fill="#ffff00"/>
<rect x="208" y="304" width="92" height="1" fill="#ffff00"/>
<rect x="300" y="303" width="1" height="1" fill="#ffff00"/>
<rect x="301" y="302" width="1" height="1" fill="#ffff00"/>
<rect x="302" y="300" width="1" height="2" fill="#ffff00"/>
<rect x="303" y="298" width="1" height="2" fill="#ffff00"/>
<rect x="304" y="296" width="1" height="2" fill="#ffff00"/>
<rect x="305" y="292" width="1" height="4" fill="#ffff00"/>
<rect x="306" y="288" width="1" height="4" fill="#ffff00"/>
<rect x="307" y="279" width="1" height="9" fill="#ffff00"/>
<rect x="308" y="236" width="1" height="43" fill="#ffff00"/>
<rect x="309" y="210" width="1" height="26" fill="#ffff00"/>
<rect x="310" y="192" width="1" height="18" fill="#ffff00"/>
<rect x="311" y="181" width="1" height="11" fill="#ffff00"/>
<rect x="312" y="173" width="1" height="8" fill="#ffff00"/>
<rect x="313" y="169" width="1" height="4" fill="#ffff00"/>
<rect x="314" y="166" width="1" height="3" fill="#ffff00"/>
<rect x="315" y="164" width="1" height="2" fill="#ffff00"/>
<rect x="316" y="163" width="1" height="1" fill="#ffff00"/>
<rect x="317" y="162" width="1" height="1" fill="#ffff00"/>
<rect x="318" y="161" width="2" height="1" fill="#ffff00"/>
<rect x="320" y="160" width="50" height="1" fill="#ffff00"/>
<rect x="370" y="161" width="1" height="2" fill="#ffff00"/>
<rect x="371" y="163" width="1" height="2" fill="#ffff00"/>
<rect x="372" y="165" width="1" height="3" fill="#ffff00"/>
<rect x="373" y="168" width="1" height="4" fill="#ffff00"/>
<rect x="374" y="172" width="1" height="4" fill="#ffff00"/>
<rect x="375" y="176" width="1" height="5" fill="#ffff00"/>
<rect x="376" y="181" width="1" height="10" fill="#ffff00"/>
<rect x="377" y="191" width="1" height="22" fill="#ffff00"/>
<rect x="378" y="213" width="1" height="21" fill="#ffff00"/>
<rect x="379" y="234" width="1" height="40" fill="#ffff00"/>
<rect x="380" y="274" width="1" height="10" fill="#ffff00"/>
<rect x="381" y="284" width="1" height="6" fill="#ffff00"/>
<rect x="382" y="290" width="1" height="4" fill="#ffff00"/>
<rect x="383" y="294" width="1" height="3" fill="#ffff00"/>
<rect x="384" y="297" width="1" height="1" fill="#ffff00"/>
<rect x="385" y="298" width="1" height="2" fill="#ffff00"/>
<rect x="386" y="300" width="1" height="1" fill="#ffff00"/>
<rect x="387" y="301" width="1" height="1" fill="#ffff00"/>
<rect x="388" y="302" width="1" height="1" fill="#ffff00"/>
<rect x="389" y="303" width="2" height="1" fill="#ffff00"/>
<rect x="391" y="304" width="92" height="1" fill="#ffff00"/>
<rect x="483" y="303" width="1" height="1" fill="#ffff00"/>
<rect x="484" y="302" width="1" height="1" fill="#ffff00"/>
<rect x="485" y="300" width="1" height="2" fill="#ffff00"/>
<rect x="486" y="298" width="1" height="2" fill="#ffff00"/>
<rect x="487" y="296" width="1" height="2" fill="#ffff00"/>
<rect x="488" y="292" width="1" height="4" fill="#ffff00"/>
<rect x="489" y="288" width="1" height="4" fill="#ffff00"/>
<rect x="490" y="279" width="1" height="9" fill="#ffff00"/>
<rect x="491" y="236" width="1" height="43" fill="#ffff00"/>
<rect x="492" y="210" width="1" height="26" fill="#ffff00"/>
<rect x="493" y="192" width="1" height="18" fill="#ffff00"/>
<rect x="494" y="181" width="1" height="11" fill="#ffff00"/>
<rect x="495" y="173" width="1" height="8" fill="#ffff00"/>
<rect x="496" y="169" width="1" height="4" fill="#ffff00"/>
<rect x="497" y="166" width="1" height="3" fill="#ffff00"/>
<rect x="498" y="164" width="1" height="2" fill="#ffff00"/>
<rect x="499" y="163" width="1" height="1" fill="#ffff00"/>
<rect x="500" y="162" width="1" height="1" fill="#ffff00"/>
<rect x="501" y="161" width="2" height="1" fill="#ffff00"/>
<rect x="503" y="160" width="50" height="1" fill="#ffff00"/>
<rect x="553" y="161" width="1" height="2" fill="#ffff00"/>
<rect x="554" y="163" width="1" height="2" fill="#ffff00"/>
<rect x="555" y="165" width="1" height="3" fill="#ffff00"/>
<rect x="556" y="168" width="1" height="4" fill="#ffff00"/>
<rect x="557" y="172" width="1" height="4" fill="#ffff00"/>
<rect x="558" y="176" width="1" height="5" fill="#ffff00"/>
<rect x="559" y="181" width="1" height="10" fill="#ffff00"/>
<rect x="560" y="191" width="1" height="22" fill="#ffff00"/>
<rect x="561" y="213" width="1" height="21" fill="#ffff00"/>
<rect x="562" y="234" width="1" height="40" fill="#ffff00"/>
<rect x="563" y="274" width="1" height="10" fill="#ffff00"/>
<rect x="564" y="284" width="1" height="6" fill="#ffff00"/>
<rect x="565" y="290" width="1" height="4" fill="#ffff00"/>
<rect x="566" y="294" width="1" height="3" fill="#ffff00"/>
<rect x="567" y="297" width="1" height="1" fill="#ffff00"/>
<rect x="568" y="298" width="1" height="2" fill="#ffff00"/>
<rect x="569" y="300" width="1" height="1" fill="#ffff00"/>
<rect x="570" y="301" width="1" height="1" fill="#ffff00"/>
<rect x="571" y="302" width="1" height="1" fill="#ffff00"/>
<rect x="572" y="303" width="2" height="1" fill="#ffff00"/>
<rect x="574" y="304" width="36" height="1" fill="#ffff00"/>
<rect x="524" y="159" width="4" height="1" fill="#ffff00"/>
<rect x="544" y="159" width="1" height="1" fill="#ffff00"/>
<rect x="22" y="290" width="588" height="1" fill="#ff9000"/>
<rect x="123" y="99" width="1" height="279" fill="#ff9000"/>
<rect x="119" y="226" width="9" height="1" fill="#ff9000"/>
<rect x="119" y="227" width="9" height="1" fill="#ff9000"/>
<rect x="120" y="228" width="7" height="1" fill="#ff9000"/>
<rect x="119" y="229" width="9" height="1" fill="#ff9000"/>
<rect x="119" y="230" width="10" height="1" fill="#ff9000"/>
<rect x="119" y="231" width="12" height="1" fill="#ff9000"/>
<rect x="119" y="232" width="11" height="1" fill="#ff9000"/>
<rect x="120" y="233" width="9" height="1" fill="#ff9000"/>
<rect x="121" y="234" width="7" height="1" fill="#ff9000"/>
<rect x="122" y="235" width="5" height="1" fill="#ff9000"/>
<rect x="123" y="236" width="3" height="1" fill="#ff9000"/>
<rect x="123" y="237" width="2" height="1" fill="#ff9000"/>
<rect x="119" y="92" width="1" height="1" fill="#ff9000"/>
<rect x="118" y="93" width="1" height="1" fill="#ff9000"/>
<rect x="120" y="93" width="1" height="1" fill="#ff9000"/>
<rect x="117" y="94" width="1" height="1" fill="#ff9000"/>
<rect x="121" y="94" width="1" height="1" fill="#ff9000"/>
<rect x="117" y="95" width="1" height="1" fill="#ff9000"/>
<rect x="121" y="95" width="1" height="1" fill="#ff9000"/>
<rect x="117" y="96" width="5" height="1" fill="#ff9000"/>
<rect x="117" y="97" width="1" height="1" fill="#ff9000"/>
<rect x="121" y="97" width="1" height="1" fill="#ff9000"/>
<rect x="117" y="98" width="1" height="1" fill="#ff9000"/>
<rect x="121" y="98" width="1" height="1" fill="#ff9000"/>
<rect x="123" y="94" width="1" height="1" fill="#ff9000"/>
<rect x="127" y="94" width="1" height="1" fill="#ff9000"/>
<rect x="124" y="95" width="1" height="1" fill="#ff9000"/>
<rect x="126" y="95" width="1" height="1" fill="#ff9000"/>
<rect x="125" y="96" width="1" height="1" fill="#ff9000"/>
<rect x="124" y="97" width="1" height="1" fill="#ff9000"/>
<rect x="126" y="97" width="1" height="1" fill="#ff9000"/>
<rect x="123" y="98" width="1" height="1" fill="#ff9000"/>
<rect x="127" y="98" width="1" height="1" fill="#ff9000"/>
<rect x="124" y="369" width="4" height="1" fill="#ff9000"/>
<rect x="124" y="370" width="1" height="1" fill="#ff9000"/>
<rect x="128" y="370" width="1" height="1" fill="#ff9000"/>
<rect x="124" y="371" width="1" height="1" fill="#ff9000"/>
<rect x="128" y="371" width="1" height="1" fill="#ff9000"/>
<rect x="124" y="372" width="4" height="1" fill="#ff9000"/>
<rect x="124" y="373" width="1" height="1" fill="#ff9000"/>
<rect x="128" y="373" width="1" height="1" fill="#ff9000"/>
<rect x="124" y="374" width="1" height="1" fill="#ff9000"/>
<rect x="128" y="374" width="1" height="1" fill="#ff9000"/>
<rect x="124" y="375" width="4" height="1" fill="#ff9000"/>
<rect x="130" y="371" width="1" height="1" fill="#ff9000"/>
<rect x="134" y="371" width="1" height="1" fill="#ff9000"/>
<rect x="131" y="372" width="1" height="1" fill="#ff9000"/>
<rect x="133" y="372" width="1" height="1" fill="#ff9000"/>
<rect x="132" y="373" width="1" height="1" fill="#ff9000"/>
<rect x="131" y="374" width="1" height="1" fill="#ff9000"/>
<rect x="133" y="374" width="1" height="1" fill="#ff9000"/>
<rect x="130" y="375" width="1" height="1" fill="#ff9000"/>
<rect x="134" y="375" width="1" height="1" fill="#ff9000"/>
<rect x="12" y="286" width="1" height="1" fill="#ff9000"/>
<rect x="11" y="287" width="1" height="1" fill="#ff9000"/>
<rect x="13" y="287" width="1" height="1" fill="#ff9000"/>
<rect x="10" y="288" width="1" height="1" fill="#ff9000"/>
<rect x="14" y="288" width="1" height="1" fill="#ff9000"/>
<rect x="10" y="289" width="1" height="1" fill="#ff9000"/>
<rect x="14" y="289" width="1" height="1" fill="#ff9000"/>
<rect x="10" y="290" width="5" height="1" fill="#ff9000"/>
<rect x="10" y="291" width="1" height="1" fill="#ff9000"/>
<rect x="14" y="291" width="1" height="1" fill="#ff9000"/>
<rect x="10" y="292" width="1" height="1" fill="#ff9000"/>
<rect x="14" y="292" width="1" height="1" fill="#ff9000"/>
<rect x="16" y="288" width="1" height="1" fill="#ff9000"/>
<rect x="20" y="288" width="1" height="1" fill="#ff9000"/>
<rect x="17" y="289" width="1" height="1" fill="#ff9000"/>
<rect x="19" y="289" width="1" height="1" fill="#ff9000"/>
<rect x="18" y="290" width="1" height="1" fill="#ff9000"/>
<rect x="18" y="291" width="1" height="1" fill="#ff9000"/>
<rect x="18" y="292" width="1" height="1" fill="#ff9000"/>
<rect x="598" y="171" width="4" height="1" fill="#ff9000"/>
<rect x="598" y="172" width="1" height="1" fill="#ff9000"/>
<rect x="602" y="172" width="1" height="1" fill="#ff9000"/>
<rect x="598" y="173" width="1" height="1" fill="#ff9000"/>
<rect x="602" y="173" width="1" height="1" fill="#ff9000"/>
<rect x="598" y="174" width="4" height="1" fill="#ff9000"/>
<rect x="598" y="175" width="1" height="1" fill="#ff9000"/>
<rect x="602" y="175" width="1" height="1" fill="#ff9000"/>
<rect x="598" y="176" width="1" height="1" fill="#ff9000"/>
<rect x="602" y="176" width="1" height="1" fill="#ff9000"/>
<rect x="598" y="177" width="4" height="1" fill="#ff9000"/>
<rect x="604" y="173" width="1" height="1" fill="#ff9000"/>
<rect x="608" y="173" width="1" height="1" fill="#ff9000"/>
<rect x="605" y="174" width="1" height="1" fill="#ff9000"/>
<rect x="607" y="174" width="1" height="1" fill="#ff9000"/>
<rect x="606" y="175" width="1" height="1" fill="#ff9000"/>
<rect x="606" y="176" width="1" height="1" fill="#ff9000"/>
<rect x="606" y="177" width="1" height="1" fill="#ff9000"/>
<rect x="621" y="223" width="5" height="1" fill="#ffff00"/>
<rect x="623" y="224" width="1" height="1" fill="#ffff00"/>
<rect x="623" y="225" width="1" height="1" fill="#ffff00"/>
<rect x="623" y="226" width="1" height="1" fill="#ffff00"/>
<rect x="623" y="227" width="1" height="1" fill="#ffff00"/>
<rect x="623" y="228" width="1" height="1" fill="#ffff00"/>
<rect x="623" y="229" width="1" height="1" fill="#ffff00"/>
<rect x="623" y="230" width="1" height="1" fill="#ffff00"/>
<rect x="613" y="227" width="7" height="1" fill="#ffff00"/>
<rect x="614" y="226" width="1" height="3" fill="#ffff00"/>
<rect x="615" y="225" width="1" height="1" fill="#ffff00"/>
<rect x="615" y="229" width="1" height="1" fill="#ffff00"/>
<rect x="613" y="305" width="7" height="1" fill="#ffff00"/>
<rect x="614" y="304" width="1" height="3" fill="#ffff00"/>
<rect x="615" y="303" width="1" height="1" fill="#ffff00"/>
<rect x="615" y="307" width="1" height="1" fill="#ffff00"/>
<rect x="619" y="305" width="1" height="8" fill="#ffff00"/>
<rect x="616" y="312" width="7" height="1" fill="#ffff00"/>
<rect x="617" y="313" width="5" height="1" fill="#ffff00"/>
<rect x="618" y="314" width="3" height="1" fill="#ffff00"/>
<rect x="619" y="315" width="1" height="1" fill="#ffff00"/>
<rect x="6" y="390" width="11" height="13" fill="#fff"/>
<rect x="6" y="390" width="10" height="12" fill="#707070"/>
<rect x="7" y="391" width="9" height="11" fill="#b2b2b2"/>
<rect x="11" y="392" width="1" height="9" fill="#000"/>
<rect x="10" y="393" width="3" height="1" fill="#000"/>
<rect x="9" y="394" width="5" height="1" fill="#000"/>
<rect x="604" y="390" width="11" height="13" fill="#fff"/>
<rect x="604" y="390" width="10" height="12" fill="#707070"/>
<rect x="605" y="391" width="9" height="11" fill="#b2b2b2"/>
<rect x="609" y="392" width="1" height="9" fill="#000"/>
<rect x="608" y="393" width="3" height="1" fill="#000"/>
<rect x="607" y="394" width="5" height="1" fill="#000"/>
<rect x="304" y="390" width="11" height="13" fill="#fff"/>
<rect x="304" y="390" width="10" height="12" fill="#707070"/>
<rect x="305" y="391" width="9" height="11" fill="#ffb400"/>
<rect x="309" y="392" width="1" height="9" fill="#000"/>
<rect x="308" y="393" width="3" height="1" fill="#000"/>
<rect x="307" y="394" width="5" height="1" fill="#000"/>
<rect x="56" y="390" width="18" height="20" fill="#fff"/>
<rect x="56" y="390" width="17" height="19" fill="#000"/>
<rect x="57" y="391" width="16" height="18" fill="#b2b2b2"/>
<path d="M63.68 395.40 L68.32 395.40 L71.60 398.68 L71.60 403.32 L68.32 406.60 L63.68 406.60 L60.40 403.32 L60.40 398.68 Z" fill="#00b0b0" stroke="#000" stroke-width="1" shape-rendering="auto"/>
<rect x="74" y="390" width="18" height="20" fill="#000"/>
<rect x="74" y="390" width="17" height="19" fill="#fff"/>
<rect x="75" y="391" width="16" height="18" fill="#b2b2b2"/>
<path d="M80.68 394.90 L85.32 394.90 L88.60 398.18 L88.60 402.82 L85.32 406.10 L80.68 406.10 L77.40 402.82 L77.40 398.18 Z" fill="#ff0000" stroke="#000" stroke-width="1" shape-rendering="auto"/>
<rect x="92" y="390" width="18" height="20" fill="#000"/>
<rect x="92" y="390" width="17" height="19" fill="#fff"/>
<rect x="93" y="391" width="16" height="18" fill="#b2b2b2"/>
<rect x="95" y="394" width="11" height="1" fill="#000"/>
<rect x="94" y="395" width="1" height="1" fill="#000"/>
<rect x="95" y="395" width="11" height="1" fill="#fff"/>
<rect x="106" y="395" width="1" height="1" fill="#000"/>
<rect x="94" y="396" width="1" height="1" fill="#000"/>
<rect x="95" y="396" width="2" height="1" fill="#fff"/>
<rect x="97" y="396" width="3" height="1" fill="#000"/>
<rect x="100" y="396" width="6" height="1" fill="#fff"/>
<rect x="106" y="396" width="1" height="1" fill="#000"/>
<rect x="94" y="397" width="1" height="1" fill="#000"/>
<rect x="95" y="397" width="1" height="1" fill="#fff"/>
<rect x="96" y="397" width="1" height="1" fill="#000"/>
<rect x="97" y="397" width="3" height="1" fill="#fff"/>
<rect x="100" y="397" width="1" height="1" fill="#000"/>
<rect x="101" y="397" width="1" height="1" fill="#fff"/>
<rect x="102" y="397" width="1" height="1" fill="#000"/>
<rect x="103" y="397" width="3" height="1" fill="#fff"/>
<rect x="106" y="397" width="1" height="1" fill="#000"/>
<rect x="94" y="398" width="1" height="1" fill="#000"/>
<rect x="95" y="398" width="6" height="1" fill="#fff"/>
<rect x="101" y="398" width="2" height="1" fill="#000"/>
<rect x="103" y="398" width="2" height="1" fill="#fff"/>
<rect x="105" y="398" width="2" height="1" fill="#000"/>
<rect x="94" y="399" width="1" height="1" fill="#000"/>
<rect x="95" y="399" width="5" height="1" fill="#fff"/>
<rect x="100" y="399" width="3" height="1" fill="#000"/>
<rect x="103" y="399" width="1" height="1" fill="#fff"/>
<rect x="104" y="399" width="1" height="1" fill="#000"/>
<rect x="105" y="399" width="1" height="1" fill="#909090"/>
<rect x="106" y="399" width="1" height="1" fill="#000"/>
<rect x="94" y="400" width="1" height="1" fill="#000"/>
<rect x="95" y="400" width="8" height="1" fill="#fff"/>
<rect x="103" y="400" width="1" height="1" fill="#000"/>
<rect x="104" y="400" width="2" height="1" fill="#909090"/>
<rect x="106" y="400" width="1" height="1" fill="#000"/>
<rect x="94" y="401" width="1" height="1" fill="#000"/>
<rect x="95" y="401" width="7" height="1" fill="#fff"/>
<rect x="102" y="401" width="1" height="1" fill="#000"/>
<rect x="103" y="401" width="3" height="1" fill="#909090"/>
<rect x="106" y="401" width="1" height="1" fill="#000"/>
<rect x="94" y="402" width="1" height="1" fill="#000"/>
<rect x="95" y="402" width="6" height="1" fill="#fff"/>
<rect x="101" y="402" width="1" height="1" fill="#000"/>
<rect x="102" y="402" width="4" height="1" fill="#909090"/>
<rect x="106" y="402" width="1" height="1" fill="#000"/>
<rect x="94" y="403" width="1" height="1" fill="#000"/>
<rect x="95" y="403" width="5" height="1" fill="#fff"/>
<rect x="100" y="403" width="1" height="1" fill="#000"/>
<rect x="101" y="403" width="5" height="1" fill="#909090"/>
<rect x="106" y="403" width="1" height="1" fill="#000"/>
<rect x="95" y="404" width="11" height="1" fill="#000"/>
<rect x="182" y="390" width="18" height="20" fill="#000"/>
<rect x="182" y="390" width="17" height="19" fill="#fff"/>
<rect x="183" y="391" width="16" height="18" fill="#b2b2b2"/>
<rect x="198" y="392" width="1" height="17" fill="#888"/>
<rect x="184" y="408" width="15" height="1" fill="#888"/>
<rect x="184" y="393" width="13" height="14" fill="#000"/>
<text x="190.7" y="405" font-family="'Liberation Sans', sans-serif" font-size="14" fill="#fff" font-weight="bold" text-anchor="middle">H</text>
<rect x="488" y="390" width="18" height="20" fill="#000"/>
<rect x="488" y="390" width="17" height="19" fill="#fff"/>
<rect x="489" y="391" width="16" height="18" fill="#b2b2b2"/>
<rect x="504" y="392" width="1" height="17" fill="#888"/>
<rect x="490" y="408" width="15" height="1" fill="#888"/>
<rect x="491" y="393" width="12" height="14" fill="#000"/>
<rect x="492" y="395" width="10" height="1" fill="#ffff00"/>
<rect x="492" y="396" width="10" height="1" fill="#808000"/>
<rect x="496" y="395" width="2" height="10" fill="#ffff00"/>
<rect x="203" y="390" width="66" height="22" fill="#fff"/>
<rect x="203" y="390" width="65" height="21" fill="#505050"/>
<rect x="204" y="391" width="64" height="20" fill="#000"/>
<rect x="267" y="391" width="1" height="20" fill="#d0d0d0"/>
<text transform="translate(206.3 404) scale(1 1.04)" font-family="'Liberation Sans', sans-serif" font-size="12" fill="#fff" textLength="21.30" lengthAdjust="spacingAndGlyphs" stroke="#fff" stroke-width="0.12">10.0</text>
<text transform="translate(229.3 404) scale(1 1.04)" font-family="'Liberation Sans', sans-serif" font-size="12" fill="#fff" textLength="31.20" lengthAdjust="spacingAndGlyphs" stroke="#fff" stroke-width="0.12">µs/div</text>
<rect x="270" y="391" width="14" height="21" fill="#b2b2b2"/>
<rect x="270" y="391" width="14" height="1" fill="#fff"/>
<rect x="270" y="391" width="1" height="21" fill="#fff"/>
<rect x="270" y="411" width="14" height="1" fill="#000"/>
<rect x="283" y="391" width="1" height="21" fill="#000"/>
<rect x="285" y="391" width="14" height="21" fill="#b2b2b2"/>
<rect x="285" y="391" width="14" height="1" fill="#fff"/>
<rect x="285" y="391" width="1" height="21" fill="#fff"/>
<rect x="285" y="411" width="14" height="1" fill="#000"/>
<rect x="298" y="391" width="1" height="21" fill="#000"/>
<path d="M274.2 400 C274.4 396.6 276 396.6 276.4 400.3 C276.8 404.2 278.4 404.2 278.8 400.6" fill="none" stroke="#000" stroke-width="1.3" shape-rendering="auto"/>
<path d="M287.2 400.6 C288 395.8 290.5 395.8 291.6 400.5 C292.6 404.8 294.8 404.8 295.9 400.3" fill="none" stroke="#000" stroke-width="1.3" shape-rendering="auto"/>
<rect x="320" y="390" width="84" height="22" fill="#fff"/>
<rect x="320" y="390" width="83" height="21" fill="#505050"/>
<rect x="321" y="391" width="82" height="20" fill="#000"/>
<rect x="402" y="391" width="1" height="20" fill="#d0d0d0"/>
<text transform="translate(323.2 404) scale(1 1.04)" font-family="'Liberation Sans', sans-serif" font-size="12" fill="#fff" textLength="23.50" lengthAdjust="spacingAndGlyphs" stroke="#fff" stroke-width="0.12">0.0 s</text>
<rect x="405" y="391" width="14" height="21" fill="#b2b2b2"/>
<rect x="405" y="391" width="14" height="1" fill="#fff"/>
<rect x="405" y="391" width="1" height="21" fill="#fff"/>
<rect x="405" y="411" width="14" height="1" fill="#000"/>
<rect x="418" y="391" width="1" height="21" fill="#000"/>
<rect x="420" y="391" width="14" height="21" fill="#b2b2b2"/>
<rect x="420" y="391" width="14" height="1" fill="#fff"/>
<rect x="420" y="391" width="1" height="21" fill="#fff"/>
<rect x="420" y="411" width="14" height="1" fill="#000"/>
<rect x="433" y="391" width="1" height="21" fill="#000"/>
<rect x="435" y="391" width="14" height="21" fill="#b2b2b2"/>
<rect x="435" y="391" width="14" height="1" fill="#fff"/>
<rect x="435" y="391" width="1" height="21" fill="#fff"/>
<rect x="435" y="411" width="14" height="1" fill="#000"/>
<rect x="448" y="391" width="1" height="21" fill="#000"/>
<path d="M409 400 L414 395.5 V404.5 Z" fill="#000" shape-rendering="auto"/>
<path d="M444.5 400 L439.5 395.5 V404.5 Z" fill="#000" shape-rendering="auto"/>
<text transform="translate(426.8 405) scale(0.8 1)" font-family="'Liberation Sans', sans-serif" font-size="13" fill="#000" font-weight="bold" text-anchor="middle">0</text>
<rect x="509" y="390" width="70" height="22" fill="#fff"/>
<rect x="509" y="390" width="69" height="21" fill="#505050"/>
<rect x="510" y="391" width="68" height="20" fill="#000"/>
<rect x="577" y="391" width="1" height="20" fill="#d0d0d0"/>
<text transform="translate(512.2 404) scale(1 1.04)" font-family="'Liberation Sans', sans-serif" font-size="12" fill="#ffff00" textLength="31.50" lengthAdjust="spacingAndGlyphs" stroke="#ffff00" stroke-width="0.12">2.16 V</text>
<rect x="580" y="391" width="19" height="10" fill="#b2b2b2"/>
<rect x="580" y="391" width="19" height="1" fill="#fff"/>
<rect x="580" y="391" width="1" height="10" fill="#fff"/>
<rect x="580" y="400" width="19" height="1" fill="#000"/>
<rect x="598" y="391" width="1" height="10" fill="#000"/>
<rect x="580" y="401" width="19" height="11" fill="#b2b2b2"/>
<rect x="580" y="401" width="19" height="1" fill="#fff"/>
<rect x="580" y="401" width="1" height="11" fill="#fff"/>
<rect x="580" y="411" width="19" height="1" fill="#000"/>
<rect x="598" y="401" width="1" height="11" fill="#000"/>
<rect x="588" y="393" width="1" height="1" fill="#000"/>
<rect x="587" y="394" width="3" height="1" fill="#000"/>
<rect x="586" y="395" width="5" height="1" fill="#000"/>
<rect x="585" y="396" width="7" height="1" fill="#000"/>
<rect x="584" y="397" width="9" height="1" fill="#000"/>
<rect x="588" y="408" width="1" height="1" fill="#000"/>
<rect x="587" y="407" width="3" height="1" fill="#000"/>
<rect x="586" y="406" width="5" height="1" fill="#000"/>
<rect x="585" y="405" width="7" height="1" fill="#000"/>
<rect x="584" y="404" width="9" height="1" fill="#000"/>
<g fill="#ffffff"><use href="#g10" x="122" y="418"/><use href="#g11" x="128" y="418"/><use href="#g12" x="134" y="418"/><use href="#g12" x="140" y="418"/><use href="#g13" x="146" y="418"/><use href="#g14" x="152" y="418"/><use href="#g15" x="158" y="418"/></g>
<g fill="#ffffff"><use href="#g16" x="212" y="418"/><use href="#g13" x="218" y="418"/><use href="#g17" x="224" y="418"/><use href="#g14" x="230" y="418"/></g>
<g fill="#ffffff"><use href="#g4" x="303" y="418"/><use href="#g15" x="309" y="418"/><use href="#g18" x="315" y="418"/><use href="#g18" x="327" y="418"/><use href="#g13" x="333" y="418"/><use href="#g2" x="339" y="418"/></g>
<g fill="#ffffff"><use href="#g16" x="393" y="418"/><use href="#g19" x="399" y="418"/><use href="#g14" x="405" y="418"/></g>
<g fill="#ffffff"><use href="#g16" x="483" y="418"/><use href="#g17" x="489" y="418"/><use href="#g20" x="495" y="418"/></g>
<g fill="#ffffff"><use href="#g21" x="56" y="430"/><use href="#g22" x="68" y="430"/><use href="#g23" x="74" y="430"/><use href="#g22" x="80" y="430"/><use href="#g24" x="86" y="430"/></g>
<g fill="#ffff00"><use href="#g6" x="92" y="430"/></g>
<g fill="#ffffff"><use href="#g25" x="98" y="430"/></g>
<g fill="#ffffff"><use href="#g26" x="122" y="430"/><use href="#g27" x="128" y="430"/><use href="#g28" x="134" y="430"/><use href="#g29" x="140" y="430"/><use href="#g30" x="146" y="430"/><use href="#g21" x="158" y="430"/></g>
<g fill="#ffffff"><use href="#g26" x="212" y="430"/><use href="#g27" x="218" y="430"/><use href="#g28" x="224" y="430"/><use href="#g29" x="230" y="430"/><use href="#g31" x="236" y="430"/><use href="#g32" x="242" y="430"/><use href="#g21" x="254" y="430"/></g>
<g fill="#ffffff"><use href="#g31" x="303" y="430"/><use href="#g27" x="309" y="430"/><use href="#g26" x="315" y="430"/><use href="#g16" x="327" y="430"/><use href="#g21" x="333" y="430"/></g>
<g fill="#ffffff"><use href="#g26" x="393" y="430"/><use href="#g27" x="399" y="430"/><use href="#g28" x="405" y="430"/><use href="#g6" x="411" y="430"/><use href="#g32" x="417" y="430"/><use href="#g21" x="429" y="430"/></g>
<g fill="#ffffff"><use href="#g26" x="483" y="430"/><use href="#g27" x="489" y="430"/><use href="#g28" x="495" y="430"/><use href="#g32" x="501" y="430"/><use href="#g30" x="507" y="430"/><use href="#g21" x="519" y="430"/></g>
<g fill="#ffffff"><use href="#g33" x="44" y="442"/><use href="#g13" x="50" y="442"/><use href="#g12" x="56" y="442"/><use href="#g19" x="62" y="442"/><use href="#g34" x="68" y="442"/><use href="#g18" x="74" y="442"/><use href="#g24" x="80" y="442"/></g>
<g fill="#ffff00"><use href="#g6" x="86" y="442"/></g>
<g fill="#ffffff"><use href="#g25" x="98" y="442"/></g>
<rect x="94" y="444" width="1" height="1" fill="#ff9000"/>
<rect x="93" y="445" width="3" height="1" fill="#ff9000"/>
<rect x="92" y="446" width="5" height="1" fill="#ff9000"/>
<rect x="93" y="447" width="3" height="1" fill="#ff9000"/>
<rect x="94" y="448" width="1" height="1" fill="#ff9000"/>
<g fill="#ffffff"><use href="#g31" x="122" y="442"/><use href="#g28" x="128" y="442"/><use href="#g27" x="134" y="442"/><use href="#g30" x="140" y="442"/><use href="#g29" x="146" y="442"/><use href="#g35" x="158" y="442"/><use href="#g4" x="164" y="442"/></g>
<g fill="#ffffff"><use href="#g31" x="212" y="442"/><use href="#g28" x="218" y="442"/><use href="#g27" x="224" y="442"/><use href="#g30" x="230" y="442"/><use href="#g6" x="236" y="442"/><use href="#g36" x="242" y="442"/><use href="#g35" x="254" y="442"/><use href="#g4" x="260" y="442"/></g>
<g fill="#ffffff"><use href="#g6" x="303" y="442"/><use href="#g14" x="315" y="442"/><use href="#g4" x="321" y="442"/></g>
<g fill="#ffffff"><use href="#g31" x="393" y="442"/><use href="#g28" x="399" y="442"/><use href="#g27" x="405" y="442"/><use href="#g30" x="411" y="442"/><use href="#g6" x="417" y="442"/><use href="#g35" x="429" y="442"/><use href="#g4" x="435" y="442"/></g>
<g fill="#ffffff"><use href="#g31" x="483" y="442"/><use href="#g28" x="489" y="442"/><use href="#g27" x="495" y="442"/><use href="#g30" x="501" y="442"/><use href="#g31" x="507" y="442"/><use href="#g35" x="519" y="442"/><use href="#g4" x="525" y="442"/></g>
<g fill="#ffffff"><use href="#g37" x="26" y="454"/><use href="#g12" x="32" y="454"/><use href="#g13" x="38" y="454"/><use href="#g38" x="44" y="454"/><use href="#g11" x="50" y="454"/><use href="#g13" x="56" y="454"/><use href="#g14" x="62" y="454"/><use href="#g10" x="68" y="454"/><use href="#g39" x="74" y="454"/><use href="#g24" x="80" y="454"/></g>
<g fill="#ffff00"><use href="#g6" x="86" y="454"/></g>
<g fill="#ffffff"><use href="#g25" x="98" y="454"/></g>
<rect x="93" y="456" width="3" height="1" fill="#ff9000"/>
<rect x="92" y="457" width="5" height="1" fill="#ff9000"/>
<rect x="92" y="458" width="5" height="1" fill="#ff9000"/>
<rect x="92" y="459" width="5" height="1" fill="#ff9000"/>
<rect x="92" y="460" width="5" height="1" fill="#ff9000"/>
<rect x="93" y="461" width="3" height="1" fill="#ff9000"/>
<g fill="#ffffff"><use href="#g31" x="122" y="454"/><use href="#g29" x="128" y="454"/><use href="#g27" x="134" y="454"/><use href="#g36" x="140" y="454"/><use href="#g36" x="146" y="454"/><use href="#g40" x="158" y="454"/><use href="#g41" x="164" y="454"/><use href="#g42" x="170" y="454"/></g>
<g fill="#ffffff"><use href="#g31" x="212" y="454"/><use href="#g29" x="218" y="454"/><use href="#g27" x="224" y="454"/><use href="#g36" x="230" y="454"/><use href="#g7" x="236" y="454"/><use href="#g32" x="242" y="454"/><use href="#g40" x="254" y="454"/><use href="#g41" x="260" y="454"/><use href="#g42" x="266" y="454"/></g>
<g fill="#ffffff"><use href="#g6" x="303" y="454"/><use href="#g27" x="309" y="454"/><use href="#g30" x="315" y="454"/><use href="#g43" x="321" y="454"/><use href="#g29" x="327" y="454"/><use href="#g28" x="333" y="454"/><use href="#g31" x="339" y="454"/><use href="#g43" x="345" y="454"/><use href="#g41" x="363" y="454"/><use href="#g42" x="369" y="454"/></g>
<g fill="#ffffff"><use href="#g31" x="393" y="454"/><use href="#g29" x="399" y="454"/><use href="#g27" x="405" y="454"/><use href="#g36" x="411" y="454"/><use href="#g7" x="417" y="454"/><use href="#g40" x="429" y="454"/><use href="#g41" x="435" y="454"/><use href="#g42" x="441" y="454"/></g>
<g fill="#ffffff"><use href="#g31" x="483" y="454"/><use href="#g29" x="489" y="454"/><use href="#g27" x="495" y="454"/><use href="#g36" x="501" y="454"/><use href="#g36" x="507" y="454"/><use href="#g40" x="519" y="454"/><use href="#g41" x="525" y="454"/><use href="#g42" x="531" y="454"/></g>
<g fill="#ff9000"><use href="#g44" x="26" y="466"/><use href="#g19" x="32" y="466"/><use href="#g4" x="38" y="466"/><use href="#g13" x="44" y="466"/><use href="#g15" x="56" y="466"/><use href="#g19" x="62" y="466"/><use href="#g16" x="68" y="466"/><use href="#g13" x="74" y="466"/><use href="#g24" x="80" y="466"/></g>
<g fill="#ffff00"><use href="#g6" x="86" y="466"/></g>
<g fill="#ff9000"><use href="#g25" x="98" y="466"/></g>
<rect x="92" y="469" width="5" height="1" fill="#ff9000"/>
<rect x="93" y="470" width="3" height="1" fill="#ff9000"/>
<rect x="94" y="471" width="1" height="1" fill="#ff9000"/>
<g fill="#ffffff"><use href="#g6" x="122" y="466"/><use href="#g27" x="128" y="466"/><use href="#g6" x="134" y="466"/><use href="#g29" x="140" y="466"/><use href="#g35" x="152" y="466"/><use href="#g4" x="158" y="466"/></g>
<g fill="#ffffff"><use href="#g6" x="212" y="466"/><use href="#g27" x="218" y="466"/><use href="#g6" x="224" y="466"/><use href="#g6" x="230" y="466"/><use href="#g32" x="236" y="466"/><use href="#g35" x="248" y="466"/><use href="#g4" x="254" y="466"/></g>
<g fill="#ffffff"><use href="#g30" x="303" y="466"/><use href="#g14" x="315" y="466"/><use href="#g4" x="321" y="466"/></g>
<g fill="#ffffff"><use href="#g6" x="393" y="466"/><use href="#g27" x="399" y="466"/><use href="#g6" x="405" y="466"/><use href="#g28" x="411" y="466"/><use href="#g35" x="423" y="466"/><use href="#g4" x="429" y="466"/></g>
<g fill="#ffffff"><use href="#g6" x="483" y="466"/><use href="#g27" x="489" y="466"/><use href="#g6" x="495" y="466"/><use href="#g31" x="501" y="466"/><use href="#g35" x="513" y="466"/><use href="#g4" x="519" y="466"/></g>
</svg>
</body></html>
